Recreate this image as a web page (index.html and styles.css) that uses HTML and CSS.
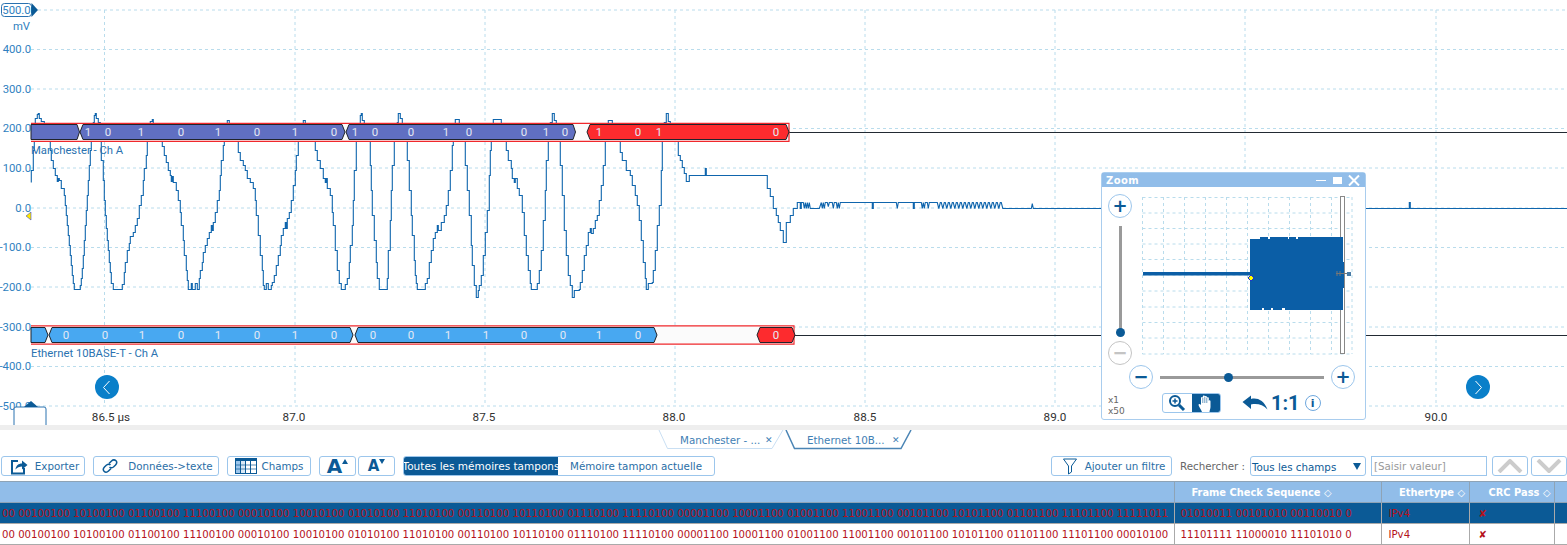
FILE: index.html
```html
<!DOCTYPE html>
<html lang="fr">
<head>
    <meta charset="UTF-8">
    <meta name="viewport" content="width=device-width, initial-scale=1.0">
    <title>Décodage série</title>
    <link rel="stylesheet" href="styles.css">
</head>
<body>

    <!-- oscilloscope view -->
    <div class="scope">
        <svg class="scope-svg" width="1567" height="425" viewBox="0 0 1567 425">
            <g class="grid">
                <path d="M38 10H1567M31 49.5H1567M31 89H1567M31 128.500H1567M31 168H1567M31 208H1567M31 247.500H1567M31 287H1567M31 327H1567M31 366.500H1567M31 406H1567"/>
                <path d="M104.500 10V406M295 10V406M485 10V406M675 10V406M865 10V406M1055 10V406M1245 10V406M1436 10V406"/>
            </g>

            <g class="axis-y">
                <text x="31" y="53">400.0</text>
                <text x="31" y="93">300.0</text>
                <text x="31" y="132">200.0</text>
                <text x="31" y="172">100.0</text>
                <text x="31" y="212">0.0</text>
                <text x="31" y="251">-100.0</text>
                <text x="31" y="291">-200.0</text>
                <text x="31" y="331">-300.0</text>
                <text x="31" y="370">-400.0</text>
                <text x="31" y="410">-500.0</text>
                <text x="30" y="30">mV</text>
            </g>

            <g class="axis-x">
                <text x="111" y="421">86.5 µs</text>
                <text x="294" y="421">87.0</text>
                <text x="484" y="421">87.5</text>
                <text x="674" y="421">88.0</text>
                <text x="865" y="421">88.5</text>
                <text x="1055" y="421">89.0</text>
                <text x="1436" y="421">90.0</text>
            </g>

            <!-- captured signal -->
            <g transform="translate(.3 .5)">
                <path class="trace" d="M31 182V170H33V150H34V125H35V118H37V114H38V113H39V118H41V121H44V125H48V141H50V150H51V160H53V168H55V175H57V181H58V178H59V180H61V188H64V195H65V205H66V215H67V225H68V235H69V245H70V255H71V265H72V275H73V283H74V289H80V285H81V278H82V268H83V255H84V240H85V225H86V210H87V195H88V180H89V165H90V150H91V135H93V122H94V115H95V113H96V118H98V122H100V141H101V160H103V180H104V200H105V215H106V228H107V240H108V250H109V262H110V272H111V283H113V289H122V284H124V272H125V262H127V250H129V243H130V236H133V232H135V225H137V218H139V205H141V195H143V180H144V168H146V155H147V140H148V125H150V121H152V119H153V123H161V141H162V146H164V155H166V162H168V170H170V175H171V181H172V176H173V182H176V190H178V200H180V212H181V225H183V240H184V255H186V270H187V280H188V289H191V283H192V289H195V283H197V289H199V278H200V270H202V262H203V252H205V245H207V238H209V232H211V225H212V230H213V222H215V212H217V200H219V190H220V175H221V160H223V145H224V125H227V120H229V123H236V141H238V152H240V160H243V165H245V170H247V178H250V182H253V188H255V200H256V215H258V235H260V255H262V270H263V285H264V289H266V283H268V289H271V285H272V282H274V275H276V265H278V255H280V245H281V235H283V228H285V222H286V228H287V218H289V212H291V200H293V185H295V170H296V155H298V141H300V125H303V120H305V123H313V141H315V150H317V160H320V168H323V178H325V182H326V178H327V188H330V195H332V212H333V225H335V250H337V270H339V283H341V289H345V284H347V278H349V262H350V245H352V225H353V200H354V170H356V141H358V125H360V115H361V113H362V120H364V123H368V141H370V165H371V190H372V215H374V240H376V262H377V278H379V289H387V278H388V250H390V220H391V190H392V165H394V141H397V122H398V113H400V118H402V123H405V141H407V160H409V190H411V215H412V235H414V260H415V275H416V283H417V289H425V283H427V278H429V262H431V250H433V238H435V232H437V225H438V230H441V222H444V215H446V205H448V190H450V170H452V145H453V125H455V119H459V123H463V141H465V165H467V190H469V215H471V245H472V265H474V285H476V297H478V290H479V285H481V275H483V255H485V232H487V210H489V175H490V150H491V125H493V119H501V123H504V141H506V150H508V160H511V168H512V178H514V182H515V178H517V188H519V195H522V212H524V235H526V255H528V270H530V283H531V289H537V283H539V270H541V250H543V220H545V190H546V160H548V141H550V122H552V113H554V120H556V123H558V141H560V165H562V195H564V230H566V255H568V275H570V285H572V297H574V290H579V289H580V282H582V270H584V255H586V245H588V232H590V228H591V233H593V228H595V220H597V215H599V200H601V185H603V165H605V141H607V125H608V120H612V123H618V141H620V152H622V160H626V170H630V175H632V185H635V195H637V205H639V220H641V240H643V262H645V278H646V289H648V283H652V282H653V270H655V250H657V225H659V205H661V170H662V141H664V122H666V113H668V121H670V123H677V141H678V155H680V160H682V167H684V173H686V181H689V175H705V168H706V175H767V188H770V196H773V208H776V215H778V222H780V230H783V242H786V222H790V215H793V208H797V202h3v6h1v-6h2l1 6 1-6 1 6 1-6 1 6 1-6 1 6H819l2-6 1 6 1-6 1 6 1-6h2l1 4 1-4h3l1 6 1-6h2l1 6 1-6 1 6 1-6H872v6h1v-6H896l1 6 1-6H913v6h1v-6H921l1 6 1-6 1 6 1-6h2l1 6 1-6H937l1.500 6 1.500-6h1l1.500 6 1.500-6h1l1.500 6 1.500-6h1l1.500 6 1.500-6h1l1.500 6 1.500-6h1l1.500 6 1.500-6h1l1.500 6 1.500-6h1l1.500 6 1.500-6h1l1.500 6 1.500-6h1l1.500 6 1.500-6h1l1.500 6 1.500-6h1l1.500 6 1.500-6h1l1.500 6 1.500-6h1l1.500 6 1.500-6h1l1.500 6 1.500-6h1l1.500 6 1.500-6h1l1.500 6H1031l1-5 1 5H1409V202h1v6H1567"/>
            </g>

            <!-- decoded bus 1 -->
            <path class="bus-line" d="M789 132.500H1567"/>
            <path class="bus-frame" d="M31 123.300H789V141.300H31"/>
            <polygon class="seg seg-manch" points="31,124.500 77,124.500 79.500,132 77,139.500 31,139.500"/>
            <polygon class="seg seg-manch" points="80,132 83,124.500 342,124.500 345,132 342,139.500 83,139.500"/>
            <polygon class="seg seg-manch" points="346,132 349,124.500 573,124.500 575.500,132 573,139.500 349,139.500"/>
            <polygon class="seg seg-err" points="587,132 590,124.500 786,124.500 789,132 786,139.500 590,139.500"/>
            <g class="bits">
                <text x="88" y="136">1</text><text x="108" y="136">0</text><text x="141" y="136">1</text><text x="181" y="136">0</text>
                <text x="218" y="136">1</text><text x="257" y="136">0</text><text x="295" y="136">1</text><text x="334" y="136">0</text>
                <text x="355" y="136">1</text><text x="375" y="136">0</text><text x="411" y="136">0</text><text x="446" y="136">1</text>
                <text x="469" y="136">0</text><text x="524" y="136">0</text><text x="546" y="136">1</text><text x="565" y="136">0</text>
                <text x="599" y="136">1</text><text x="638" y="136">0</text><text x="659" y="136">1</text><text x="776" y="136">0</text>
            </g>
            <text class="bus-name" x="31" y="154">Manchester - Ch A</text>

            <!-- decoded bus 2 -->
            <path class="bus-line" d="M794 335.500H1567"/>
            <path class="bus-frame" d="M31 325.800H794V344.200H31"/>
            <polygon class="seg seg-eth" points="31,327.500 45,327.500 48,335 45,342.500 31,342.500"/>
            <polygon class="seg seg-eth" points="49,335 52,327.500 350,327.500 353,335 350,342.500 52,342.500"/>
            <polygon class="seg seg-eth" points="355,335 358,327.500 654,327.500 657,335 654,342.500 358,342.500"/>
            <polygon class="seg seg-err" points="757,335 760,327.500 792,327.500 795,335 792,342.500 760,342.500"/>
            <g class="bits">
                <text x="66" y="339">0</text><text x="105" y="339">0</text><text x="142" y="339">1</text><text x="181" y="339">0</text>
                <text x="218" y="339">1</text><text x="257" y="339">0</text><text x="295" y="339">1</text><text x="334" y="339">0</text>
                <text x="373" y="339">0</text><text x="411" y="339">0</text><text x="448" y="339">1</text><text x="486" y="339">1</text>
                <text x="524" y="339">0</text><text x="563" y="339">0</text><text x="599" y="339">1</text><text x="638" y="339">0</text>
                <text x="776" y="339">0</text>
            </g>
            <text class="bus-name" x="31" y="357">Ethernet 10BASE-T - Ch A</text>

            <!-- handles -->
            <rect class="handle-box" x="1.500" y="3.500" width="30" height="13" rx="3"/>
            <text class="handle-text" x="16.500" y="14">500.0</text>
            <polygon class="handle-tip" points="31.500,3 38,10 31.500,17"/>
            <polygon class="zero-mark" points="26,216 31,212 31,220"/>
            <path class="handle-box" d="M14 425V409Q14 407 16 407H44Q46 407 46 409V425"/>
            <polygon class="handle-tip" points="31,401 24,407 38,407"/>
        </svg>

        <button class="nav nav-left" type="button">
            <svg width="24" height="24" viewBox="0 0 24 24"><path d="M14.500 6 8.500 12.500 14.500 19"/></svg>
        </button>
        <button class="nav nav-right" type="button">
            <svg width="24" height="24" viewBox="0 0 24 24"><path d="M9.500 6 15.500 12.500 9.500 19"/></svg>
        </button>

        <!-- zoom window -->
        <div class="zoom-win">
            <div class="zoom-title">
                <span class="zoom-name">Zoom</span>
                <span class="zoom-ctrl">
                    <svg width="48" height="12" viewBox="0 0 48 12">
                        <path d="M3 6.500H13" stroke-width="1"/>
                        <path d="M20 3H29V10H20Z" fill="#fff" stroke="none"/>
                        <path d="M36 1.500 46 11.500M46 1.500 36 11.500" stroke-width="2"/>
                    </svg>
                </span>
            </div>
            <div class="zoom-body">
                <div class="zoom-main">
                    <div class="slider-v">
                        <span class="round-btn">+</span>
                        <span class="track-v"><span class="thumb thumb-v"></span></span>
                        <span class="round-btn round-off">−</span>
                    </div>
                    <svg class="preview" width="212" height="160" viewBox="0 0 212 160">
                        <g class="grid">
                            <path d="M1.500 2.500H211M1.500 18H211M1.500 33.500H211M1.500 49H211M1.500 64.500H211M1.500 80H211M1.500 96H211M1.500 112H211M1.500 127.500H211M1.500 143H211M1.500 159H211"/>
                            <path d="M1.500 2V159M22.500 2V159M43.500 2V159M64.500 2V159M85.500 2V159M106.500 2V159M127.500 2V159M148.500 2V159M169.500 2V159M190.500 2V159M211 2V159"/>
                        </g>
                        <rect class="handle-bar" x="199.500" y="1.500" width="4" height="157"/>
                        <rect x="2" y="77" width="107" height="3.500" fill="#0b5ea6"/>
                        <path d="M109 44H116V42H202V67H203V93H202V115H109Z" fill="#0b5ea6"/>
                        <path d="M116 41h3v3h-3zM127 41h2v3h-2zM147 41h1v3h-1zM155 41h2v3h-2zM121 113h2v3h-2zM130 113h2v3h-2zM141 113h3v3h-3z" fill="#fff"/>
                        <polygon points="107,83 110,80 113,83 110,86" fill="#ff0" stroke="#2233cc" stroke-width="1"/>
                        <path d="M195 78.500H209M196 76V81M199 76V81" stroke="#777" fill="none"/>
                        <rect x="206" y="77" width="4" height="4" fill="#4a7ca6"/>
                    </svg>
                </div>
                <div class="slider-h">
                    <span class="round-btn">−</span>
                    <span class="track-h"><span class="thumb thumb-h"></span></span>
                    <span class="round-btn">+</span>
                </div>
                <div class="zoom-foot">
                    <span class="scale"><span>x1</span><span>x50</span></span>
                    <span class="tool-seg">
                        <span class="tool">
                            <svg width="20" height="18" viewBox="0 0 20 18">
                                <circle cx="8" cy="7" r="5" fill="none" stroke="#0b5a96" stroke-width="2"/>
                                <path d="M5.500 7H10.500M8 4.500V9.500" stroke="#0b5a96" stroke-width="1.500"/>
                                <path d="M12 11 17 16" stroke="#0b5a96" stroke-width="3"/>
                            </svg>
                        </span>
                        <span class="tool tool-on">
                            <svg width="18" height="19" viewBox="0 0 18 19">
                                <path d="M5 18C4 15 2 13 1.500 11C1.500 9.500 3 9.500 4 11V4C4 2.800 5.800 2.800 5.800 4V2.500C5.800 1.200 7.800 1.200 7.800 2.500V3C7.800 1.800 9.800 1.800 9.800 3V4C9.800 3 11.800 3 11.800 4V7C11.800 6 13.500 6 13.500 7.500V13C13.500 15 12.500 16 12.500 18Z" fill="#fff"/>
                                <path d="M5.800 4V9M7.800 3V9M9.800 4V9" stroke="#0b5a96" stroke-width=".6"/>
                            </svg>
                        </span>
                    </span>
                    <svg class="undo" width="26" height="16" viewBox="0 0 26 16">
                        <path d="M0.500 7 9 0.500V4C15 2.500 22 5 25.500 14.500C21 9.500 15 8.300 9 9.500V14Z" fill="#0b5a96"/>
                    </svg>
                    <span class="one-one">1:1</span>
                    <span class="info">i</span>
                </div>
            </div>
        </div>
    </div>

    <div class="strip"></div>

    <div class="tabs">
        <div class="tab">
            <svg class="tab-shape" width="127" height="20" viewBox="0 0 127 20"><path d="M1 0 9.500 18.500H114L125 0"/></svg>
            <span class="tab-text">Manchester - ...</span>
            <span class="tab-x">✕</span>
        </div>
        <div class="tab tab-on">
            <svg class="tab-shape" width="127" height="20" viewBox="0 0 127 20"><path d="M1 0 9.500 18.500H116L126 0"/></svg>
            <span class="tab-text">Ethernet 10B...</span>
            <span class="tab-x">✕</span>
        </div>
    </div>

    <div class="toolbar">
        <button class="btn btn-export" type="button">
            <svg width="18" height="17" viewBox="0 0 18 17">
                <path d="M8 3H2V15.500H14V10" fill="none" stroke="#0b5a96" stroke-width="2"/>
                <path d="M5.500 11.500C6 7.500 8.500 5.500 12 5.500V2.500L17.500 7L12 11.500V8.500C9.500 8.500 7 9.500 5.500 11.500Z" fill="#0b5a96"/>
            </svg>
            Exporter
        </button>
        <button class="btn btn-text" type="button">
            <svg width="16" height="16" viewBox="0 0 16 16" fill="none" stroke="#0b5a96" stroke-width="1.500">
                <path d="M7 5.500 9.500 3C11 1.500 13 1.800 14 2.800C15 3.800 14.800 5.500 13.500 7L11.500 9C10 10 8.500 10 7.500 9"/>
                <path d="M9 10.500 6.500 13C5 14.500 3 14.200 2 13.200C1 12.200 1.200 10.500 2.500 9L4.500 7C6 6 7.500 6 8.500 7"/>
            </svg>
            Données-&gt;texte
        </button>
        <button class="btn btn-fields" type="button">
            <svg width="22" height="16" viewBox="0 0 22 16">
                <rect x="0" y="0" width="22" height="16" fill="#0b5a96"/>
                <rect x="1" y="3" width="4" height="12" fill="#9cc6ec"/>
                <rect x="6" y="3" width="4" height="12" fill="#d9e8f5"/>
                <rect x="11" y="3" width="4" height="12" fill="#fff"/>
                <rect x="16" y="3" width="5" height="12" fill="#fff"/>
                <path d="M1 7H21M1 11H21" stroke="#0b5a96" stroke-width=".7"/>
            </svg>
            Champs
        </button>
        <button class="btn btn-font" type="button">
            <span class="font-a font-big">A</span>
            <svg class="font-tri" width="6" height="5" viewBox="0 0 6 5"><polygon points="3,0 6,5 0,5"/></svg>
        </button>
        <button class="btn btn-font btn-font-small" type="button">
            <span class="font-a">A</span>
            <svg class="font-tri" width="6" height="5" viewBox="0 0 6 5"><polygon points="0,0 6,0 3,5"/></svg>
        </button>
        <div class="toggle">
            <span class="toggle-item toggle-on">Toutes les mémoires tampons</span>
            <span class="toggle-item">Mémoire tampon actuelle</span>
        </div>

        <div class="toolbar-right">
            <button class="btn btn-filter" type="button">
                <svg width="14" height="17" viewBox="0 0 14 17" fill="none" stroke="#0b5a96">
                    <path d="M.500 1H13.500L8.500 8V14L5.500 16V8Z"/>
                </svg>
                Ajouter un filtre
            </button>
            <span class="search-label">Rechercher :</span>
            <div class="select"><span>Tous les champs</span><i class="select-arrow"></i></div>
            <input class="search-input" type="text" placeholder="[Saisir valeur]">
            <button class="btn btn-step" type="button">
                <svg width="26" height="14" viewBox="0 0 26 14"><path d="M2 13 13 2 24 13"/></svg>
            </button>
            <button class="btn btn-step" type="button">
                <svg width="26" height="14" viewBox="0 0 26 14"><path d="M2 1 13 12 24 1"/></svg>
            </button>
        </div>
    </div>

    <table class="frames">
        <colgroup>
            <col class="col-data">
            <col class="col-fcs">
            <col class="col-type">
            <col class="col-crc">
            <col class="col-end">
        </colgroup>
        <thead>
            <tr>
                <th></th>
                <th class="th-fcs">Frame Check Sequence ◇</th>
                <th class="th-type">Ethertype ◇</th>
                <th class="th-crc">CRC Pass ◇</th>
                <th></th>
            </tr>
        </thead>
        <tbody>
            <tr class="row-on">
                <td>00 00100100 10100100 01100100 11100100 00010100 10010100 01010100 11010100 00110100 10110100 01110100 11110100 00001100 10001100 01001100 11001100 00101100 10101100 01101100 11101100 11111011</td>
                <td class="td-fcs">01010011 00101010 00110010 0</td>
                <td class="td-type">IPv4</td>
                <td class="td-crc"><span class="cross">✘</span></td>
                <td></td>
            </tr>
            <tr>
                <td>00 00100100 10100100 01100100 11100100 00010100 10010100 01010100 11010100 00110100 10110100 01110100 11110100 00001100 10001100 01001100 11001100 00101100 10101100 01101100 11101100 00010100</td>
                <td class="td-fcs">11101111 11000010 11101010 0</td>
                <td class="td-type">IPv4</td>
                <td class="td-crc"><span class="cross">✘</span></td>
                <td></td>
            </tr>
        </tbody>
    </table>

</body>
</html>
```

FILE: styles.css
```css
* {
    box-sizing: border-box;
}

html, body {
    margin: 0;
    padding: 0;
    height: 545px;
    overflow: hidden;
}

body {
    background: #fff;
    font-family: "DejaVu Sans", sans-serif;
    font-size: 10.300px;
    color: #2a6ea6;
}

button {
    font-family: inherit;
    font-size: inherit;
    color: inherit;
}

/* scope */
.scope {
    position: relative;
    height: 425px;
}

.scope-svg {
    display: block;
}

.grid path {
    fill: none;
    stroke: #b9dcec;
    stroke-width: 1;
    stroke-dasharray: 3 3;
}

.axis-y text {
    font-family: Roboto, sans-serif;
    font-size: 11.300px;
    fill: #2f7fc0;
    text-anchor: end;
}

.axis-x text {
    font-family: Roboto, sans-serif;
    font-size: 11.700px;
    fill: #333;
    text-anchor: middle;
}

.trace {
    fill: none;
    stroke: #0f65ad;
    stroke-width: 1.100;
}

.bus-line {
    fill: none;
    stroke: #222a33;
    stroke-width: 1;
}

.bus-frame {
    fill: #fbfbfb;
    stroke: #f0282c;
    stroke-width: 1.200;
}

.seg {
    stroke: #20242c;
    stroke-width: 1;
}

.seg-manch {
    fill: #606fc2;
}

.seg-eth {
    fill: #48a8f1;
}

.seg-err {
    fill: #fd2b2e;
}

.bits text {
    font-family: Roboto, sans-serif;
    font-size: 11.500px;
    fill: #e4e8f4;
    text-anchor: middle;
}

.bus-name {
    font-family: Roboto, sans-serif;
    font-size: 11.300px;
    fill: #2a72b0;
}

.handle-box {
    fill: #fff;
    stroke: #2a72b0;
    stroke-width: 1;
}

.handle-text {
    font-family: Roboto, sans-serif;
    font-size: 11.300px;
    fill: #2f7fc0;
    text-anchor: middle;
}

.handle-tip {
    fill: #0b5a96;
}

.zero-mark {
    fill: #ffe900;
    stroke: #2233cc;
    stroke-width: .5;
}

/* round arrows over the plot */
.nav {
    position: absolute;
    top: 375px;
    width: 24px;
    height: 24px;
    padding: 0;
    border: none;
    border-radius: 50%;
    background: #0a7fc9;
}

.nav svg {
    display: block;
}

.nav path {
    fill: none;
    stroke: #fff;
    stroke-width: 1;
}

.nav-left {
    left: 95px;
}

.nav-right {
    left: 1466px;
}

/* zoom window */
.zoom-win {
    position: absolute;
    left: 1101px;
    top: 172px;
    width: 265px;
    height: 248px;
    background: #fff;
    border: 1px solid #a9cdee;
    border-radius: 3px;
}

.zoom-title {
    display: flex;
    align-items: center;
    justify-content: space-between;
    height: 14px;
    padding: 0 4px;
    background: #91bde9;
}

.zoom-name {
    color: #fff;
    font-size: 10px;
    font-weight: bold;
    letter-spacing: .4px;
}

.zoom-ctrl svg {
    display: block;
    fill: none;
    stroke: #fff;
}

.zoom-body {
    padding: 7px 6px 0;
}

.zoom-main {
    display: flex;
    gap: 9px;
}

.round-btn {
    display: flex;
    flex: none;
    align-items: center;
    justify-content: center;
    width: 24px;
    height: 24px;
    border: 1px solid #9cc6ec;
    border-radius: 50%;
    color: #0b5a96;
    font-size: 18px;
    font-weight: bold;
    line-height: 1;
}

.round-off {
    border-color: #c4c4c4;
    color: #c4c4c4;
}

.slider-v {
    display: flex;
    flex-direction: column;
    align-items: center;
    gap: 8px;
    width: 24px;
}

.track-v {
    position: relative;
    width: 3px;
    height: 107px;
    background: #9a9a9a;
}

.track-h {
    position: relative;
    width: 164px;
    height: 3px;
    background: #9a9a9a;
}

.thumb {
    position: absolute;
    width: 9px;
    height: 9px;
    border-radius: 50%;
    background: #0b5a96;
}

.thumb-v {
    left: -3px;
    bottom: -4px;
}

.thumb-h {
    left: 64px;
    top: -3px;
}

.preview {
    display: block;
    flex: none;
    margin-top: 1px;
}

.handle-bar {
    fill: #fff;
    stroke: #888;
}

.slider-h {
    display: flex;
    align-items: center;
    gap: 7px;
    margin-left: 21px;
    margin-top: 0;
}

.zoom-foot {
    display: flex;
    align-items: center;
    margin-top: 4px;
    height: 20px;
}

.scale {
    display: flex;
    flex-direction: column;
    width: 54px;
    margin-top: 6px;
    color: #666;
    font-size: 9px;
    line-height: 11px;
}

.tool-seg {
    display: flex;
    width: 59px;
    height: 20px;
    border: 1px solid #9cc6ec;
    border-radius: 3px;
    overflow: hidden;
}

.tool {
    display: flex;
    flex: 1;
    align-items: center;
    justify-content: center;
}

.tool-on {
    background: #0b5a96;
}

.undo {
    margin-left: 21px;
}

.one-one {
    margin-left: 3px;
    color: #0b5a96;
    font-family: Roboto, sans-serif;
    font-size: 20px;
    font-weight: bold;
    line-height: 20px;
}

.info {
    display: flex;
    align-items: center;
    justify-content: center;
    width: 16px;
    height: 16px;
    margin-left: 5px;
    border: 1px solid #6fa8de;
    border-radius: 50%;
    color: #0b5a96;
    font-size: 11px;
    font-weight: bold;
}

/* tabs */
.strip {
    height: 5px;
    background: #eee;
}

.tabs {
    display: flex;
    gap: 0;
    height: 26px;
    margin-left: 658px;
}

.tab {
    position: relative;
    display: flex;
    align-items: center;
    width: 127px;
    height: 20px;
    padding: 0 0 0 22px;
    color: #3f80b4;
}

.tab-shape {
    position: absolute;
    left: 0;
    top: 0;
}

.tab-shape path {
    fill: none;
    stroke: #c9dff3;
    stroke-width: 1;
}

.tab-on .tab-shape path {
    stroke: #4b85b5;
    stroke-width: 1.500;
}

.tab-text {
    width: 85px;
    white-space: nowrap;
}

.tab-x {
    font-size: 9px;
}

/* toolbar */
.toolbar {
    display: flex;
    align-items: center;
    gap: 8px;
    height: 20px;
    padding-left: 1px;
}

.btn {
    display: flex;
    align-items: center;
    justify-content: center;
    height: 20px;
    padding: 0;
    background: #fff;
    border: 1px solid #9cc6ec;
    border-radius: 3px;
}

.btn-export {
    gap: 7px;
    width: 84px;
    padding-left: 3px;
}

.btn-text {
    gap: 10px;
    width: 126px;
    padding-left: 3px;
}

.btn-fields {
    gap: 5px;
    width: 84px;
}

.btn-filter {
    gap: 8px;
    width: 121px;
    padding-left: 5px;
}

.btn-font {
    width: 37px;
    color: #0b5a96;
}

.btn-font-small {
    margin-left: -6px;
}

.font-a {
    font-size: 15px;
    font-weight: bold;
    line-height: 1;
}

.font-big {
    font-size: 20px;
}

.font-tri {
    margin-bottom: 9px;
    fill: #0b5a96;
}

.toggle {
    display: flex;
    width: 312px;
    height: 20px;
    border: 1px solid #9cc6ec;
    border-radius: 3px;
    overflow: hidden;
}

.toggle-item {
    display: flex;
    flex: 1;
    align-items: center;
    justify-content: center;
    white-space: nowrap;
}

.toggle-on {
    flex: none;
    width: 154px;
    background: #0b5a96;
    color: #fff;
    font-size: 10.500px;
}

.toolbar-right {
    display: flex;
    align-items: center;
    margin-left: auto;
}

.search-label {
    margin-left: 8px;
    width: 70px;
    color: #666;
}

.select {
    display: flex;
    align-items: center;
    justify-content: space-between;
    width: 116px;
    height: 20px;
    padding: 1px 4px 0 1px;
    border: 1px solid #9cc6ec;
    border-radius: 3px;
    color: #0b5a96;
}

.select-arrow {
    width: 0;
    height: 0;
    border-left: 4px solid transparent;
    border-right: 4px solid transparent;
    border-top: 7px solid #0b5a96;
}

.search-input {
    width: 116px;
    height: 20px;
    margin-left: 5px;
    padding: 0 2px;
    border: 1px solid #9cc6ec;
    font-family: inherit;
    font-size: 10.300px;
}

.search-input::placeholder {
    color: #999;
    opacity: 1;
}

.btn-step {
    width: 36px;
    margin-left: 5px;
}

.btn-step + .btn-step {
    margin-left: 3px;
}

.btn-step path {
    fill: none;
    stroke: #ccc;
    stroke-width: 4;
}

/* frames table */
.frames {
    width: 1567px;
    margin-top: 5px;
    border-collapse: collapse;
    table-layout: fixed;
    font-size: 10.170px;
    color: #b5121b;
}

.col-data {
    width: 1174px;
}

.col-fcs {
    width: 207px;
}

.col-type {
    width: 88px;
}

.col-crc {
    width: 85px;
}

.col-end {
    width: 13px;
}

.frames th {
    height: 21px;
    padding: 0;
    background: #91bde9;
    border: 1px solid #8ea3b6;
    border-left: none;
    color: #fff;
    font-size: 9.900px;
    font-weight: bold;
    text-align: center;
    white-space: nowrap;
}

.frames th.th-fcs {
    padding-right: 32px;
}

.frames th.th-type {
    padding-left: 14px;
}

.frames th.th-crc {
    padding-left: 16px;
}

.frames td {
    height: 21px;
    padding: 0 0 0 2px;
    border-bottom: 1px solid #aaa;
    border-right: 1px solid #aaa;
    white-space: nowrap;
    overflow: hidden;
}

.frames td.td-fcs {
    padding-left: 6px;
}

.frames td.td-type {
    padding-left: 7px;
}

.frames td.td-crc {
    padding-left: 9px;
}

.row-on td {
    background: #0b5a96;
}

.cross {
    font-size: 10px;
}
```
